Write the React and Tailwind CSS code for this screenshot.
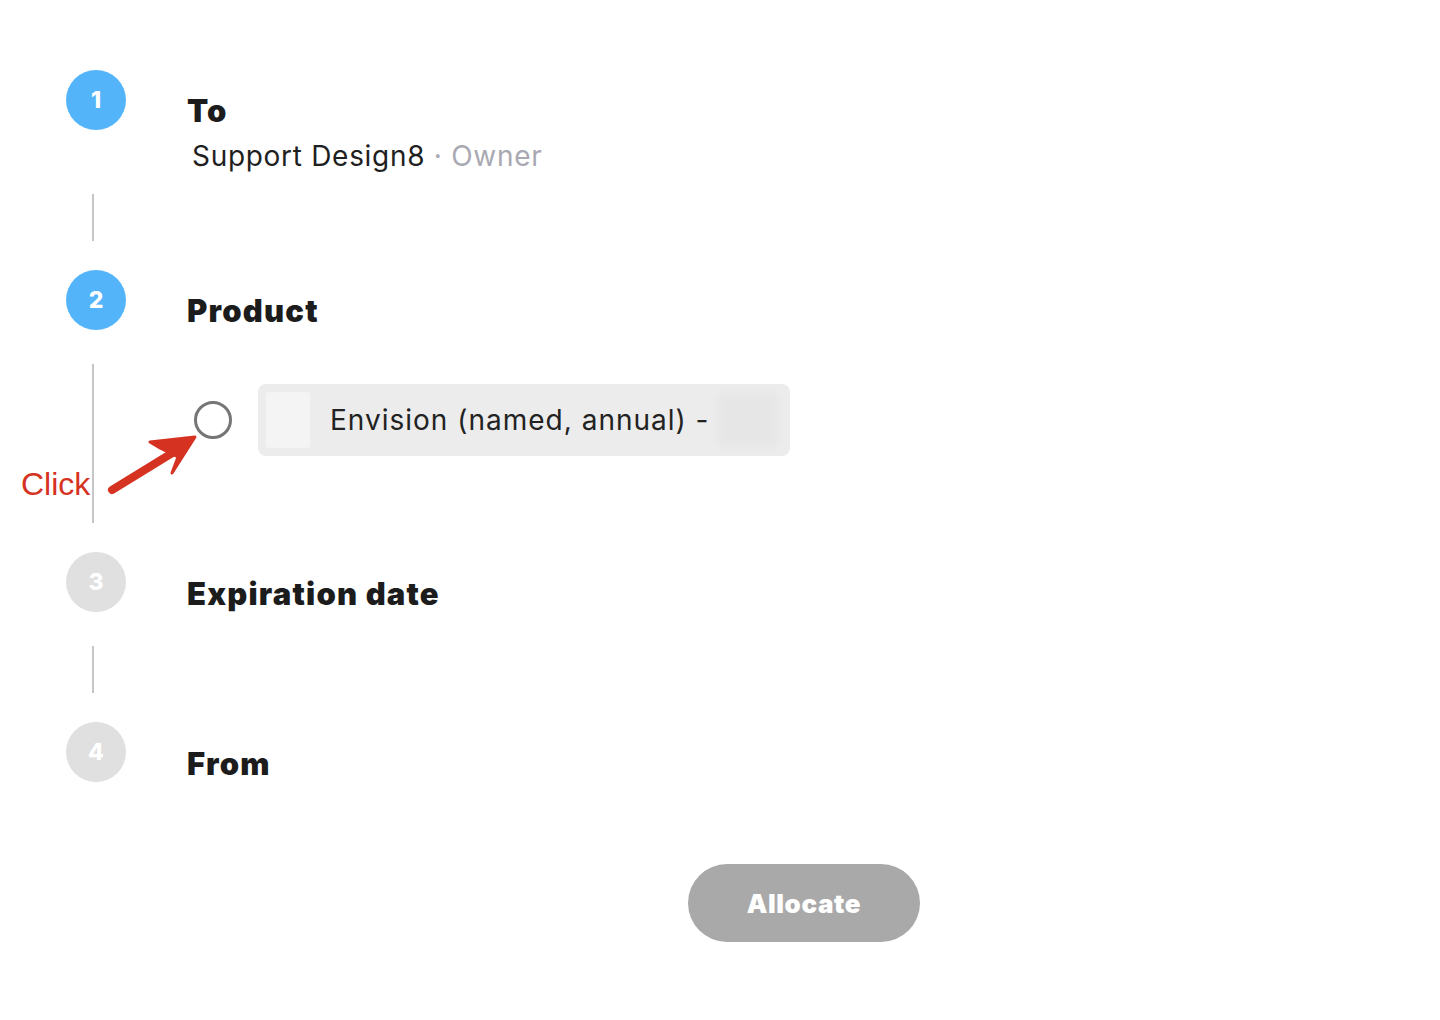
import React from 'react';

const font = { fontFamily: 'Inter, "Noto Sans", sans-serif' };

function StepCircle({ n, active }) {
  return (
    <div
      className={`flex h-[60px] w-[60px] shrink-0 items-center justify-center rounded-full text-[23px] font-extrabold text-white ${
        active ? 'bg-[#54b4fa]' : 'bg-[#e0e0e0]'
      }`}
    >
      {n}
    </div>
  );
}

function Connector({ height }) {
  return <div className={`ml-[26px] w-[2px] bg-[#c6c6c6] ${height}`} />;
}

function StepHeading({ children }) {
  return (
    <h2 className="text-[31px] leading-[36px] font-black tracking-[1.2px] text-[#1c1c1c]">
      {children}
    </h2>
  );
}

function ClickArrow() {
  return (
    <svg width="110" height="70" viewBox="0 0 110 70" fill="none">
      <path d="M12 60 L82 17" stroke="#d63222" strokeWidth="8" strokeLinecap="round" />
      <path d="M95 7 L50 12 L60 18 L78 27 L72 43 L95 7 Z" fill="#d63222" stroke="#d63222" strokeWidth="3" strokeLinejoin="round" />
    </svg>
  );
}

export default function App() {
  return (
    <div className="relative min-h-[1020px] w-[1440px] bg-white" style={font}>
      <div className="pt-[70px] pl-[66px]">
        {/* step 1 */}
        <div className="flex">
          <StepCircle n="1" active />
          <div className="ml-[61px] pt-[23px]">
            <StepHeading>To</StepHeading>
            <p className="mt-[10px] pl-[5px] text-[28px] leading-[34px] tracking-[0.7px] text-[#1f1f1f]">
              Support Design8
              <span className="text-[#a9a9b3]"> · Owner</span>
            </p>
          </div>
        </div>
        <div className="mt-[21px]">
          <Connector height="h-[47px]" />
        </div>

        {/* step 2 */}
        <div className="mt-[29px] flex">
          <StepCircle n="2" active />
          <div className="ml-[61px] pt-[23px]">
            <StepHeading>Product</StepHeading>
          </div>
        </div>
        <div className="mt-[34px] flex">
          <div className="w-[60px] shrink-0">
            <Connector height="h-[159px]" />
          </div>
          <div className="ml-[68px] mt-[20px] flex h-[72px] items-center">
            <button className="h-[38px] w-[38px] rounded-full border-[3px] border-[#767676] bg-white" />
            <div className="ml-[26px] flex h-[72px] w-[532px] items-center rounded-[8px] bg-[#ececec] pl-[8px]">
              <div className="h-[56px] w-[44px] rounded-[3px] bg-[#f4f4f4] blur-[1px]" />
              <span className="ml-[20px] text-[28px] leading-[34px] tracking-[1px] text-[#222]">
                Envision (named, annual) -
              </span>
              <div className="ml-[8px] h-[52px] w-[60px] rounded-[4px] bg-[#e6e6e6] blur-[3px]" />
            </div>
          </div>
        </div>

        {/* step 3 */}
        <div className="mt-[29px] flex">
          <StepCircle n="3" />
          <div className="ml-[61px] pt-[24px]">
            <StepHeading>Expiration date</StepHeading>
          </div>
        </div>
        <div className="mt-[34px]">
          <Connector height="h-[47px]" />
        </div>

        {/* step 4 */}
        <div className="mt-[29px] flex">
          <StepCircle n="4" />
          <div className="ml-[61px] pt-[24px]">
            <StepHeading>From</StepHeading>
          </div>
        </div>

        <div className="mt-[82px] ml-[622px]">
          <button
            disabled
            className="flex h-[78px] w-[232px] items-center justify-center rounded-full bg-[#a9a9a9] text-[26px] font-black tracking-[0.6px] text-white"
          >
            Allocate
          </button>
        </div>
      </div>

      {/* annotation */}
      <span
        className="absolute left-[21px] top-[466px] text-[32px] leading-[36px] text-[#d63222]"
        style={{ fontFamily: '"Liberation Sans", Arial, sans-serif' }}
      >
        Click
      </span>
      <div className="absolute left-[100px] top-[430px]">
        <ClickArrow />
      </div>
    </div>
  );
}
